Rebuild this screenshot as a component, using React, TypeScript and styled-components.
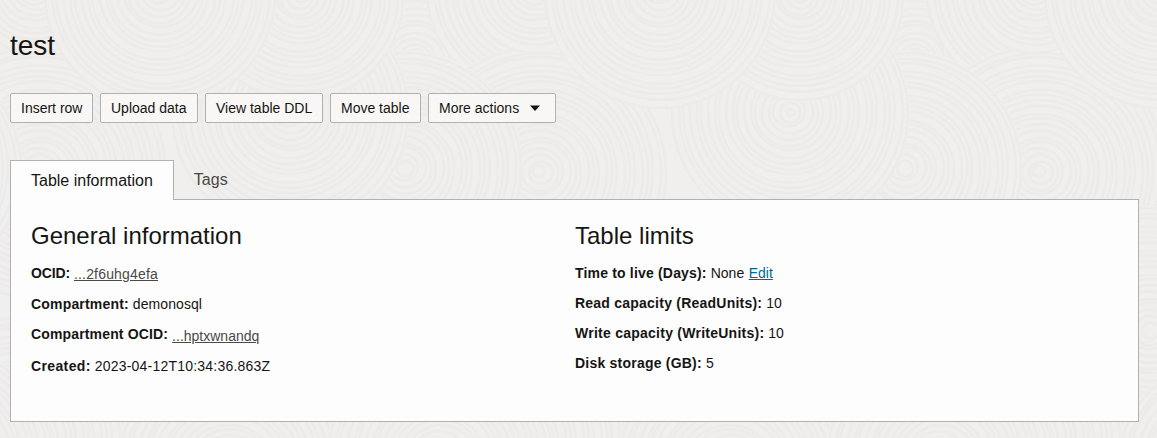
import React from "react";
import styled, { createGlobalStyle } from "styled-components";

const GlobalStyle = createGlobalStyle`
  *, *::before, *::after { box-sizing: border-box; }
  body {
    margin: 0;
    background: #f0efed;
    color: #161513;
    font-family: "Liberation Sans", Arial, sans-serif;
    font-size: 14px;
  }
`;

const Page = styled.main`
  position: relative;
  min-height: 438px;
  padding: 29px 18px 16px 10px;
  overflow: hidden;
`;

const Texture = styled.svg`
  position: absolute;
  inset: 0;
  width: 100%;
  height: 100%;
  z-index: -1;
`;

const Title = styled.h1`
  margin: 0;
  height: 64px;
  font-size: 28px;
  line-height: 34px;
  font-weight: 400;
`;

const Toolbar = styled.div`
  display: flex;
  gap: 7px;
  height: 30px;
`;

const ActionButton = styled.button<{ $width: number }>`
  display: flex;
  align-items: center;
  width: ${(p) => p.$width}px;
  height: 30px;
  padding: 0 0 0 10px;
  border: 1px solid #b3b1ae;
  border-radius: 2px;
  background: #f8f7f5;
  color: #161513;
  font: inherit;
  white-space: nowrap;
`;

const Caret = styled.svg`
  width: 10px;
  height: 6px;
  margin-left: 11px;
`;

const TabList = styled.div`
  display: flex;
  height: 40px;
  margin-top: 37px;
  margin-bottom: -1px;
  position: relative;
`;

const Tab = styled.button<{ $active?: boolean }>`
  height: 40px;
  padding: ${(p) => (p.$active ? "0 20px 0 20px" : "0 20px 2px 20px")};
  border: 1px solid ${(p) => (p.$active ? "#b3b1ae" : "transparent")};
  border-bottom: 0;
  border-left-width: ${(p) => (p.$active ? 1 : 0)}px;
  background: ${(p) => (p.$active ? "#fdfdfd" : "transparent")};
  color: ${(p) => (p.$active ? "#161513" : "#4b4946")};
  font: 16px "Liberation Sans", Arial, sans-serif;
`;

const Panel = styled.section`
  display: grid;
  grid-template-columns: 544px 1fr;
  height: 223px;
  padding: 22px 20px;
  border: 1px solid #b3b1ae;
  background: #fdfdfd;
`;

const Heading = styled.h2`
  margin: 0 0 15px;
  font-size: 24px;
  line-height: 28px;
  font-weight: 400;
`;

const Details = styled.dl`
  margin: 0;
`;

const Detail = styled.div<{ $height?: number }>`
  display: flex;
  gap: 4px;
  height: ${(p) => p.$height ?? 30}px;
  line-height: 16px;
  white-space: nowrap;
`;

const Label = styled.dt<{ $spacing?: number }>`
  font-weight: 700;
  letter-spacing: ${(p) => p.$spacing ?? 0}px;
`;

const Value = styled.dd<{ $drop?: number; $spacing?: number }>`
  margin: 0;
  padding-top: ${(p) => p.$drop ?? 0}px;
  letter-spacing: ${(p) => p.$spacing ?? 0}px;
`;

const IdLink = styled.a`
  color: #4b4946;
  text-decoration: underline;
`;

const EditLink = styled.a`
  margin-left: 4.5px;
  color: #00688c;
  text-decoration: underline;
`;

const swirls = [
  { x: 415, y: 60, r: 180 },
  { x: 35, y: -12, r: 110 },
  { x: 40, y: 172, r: 128 },
  { x: 405, y: 168, r: 118 },
  { x: 290, y: 112, r: 120 },
  { x: 300, y: -4, r: 105 },
  { x: 35, y: -12, r: 66 },
  { x: 160, y: -8, r: 117 },
  { x: 150, y: 330, r: 125 },
  { x: 330, y: 360, r: 130 },
  { x: 20, y: 440, r: 125 },
  { x: 230, y: 470, r: 115 },
  { x: 440, y: 460, r: 115 },
];

function Swirl({ x, y, r }: { x: number; y: number; r: number }) {
  const rings = Array.from({ length: Math.floor(r / 6) }, (_, i) => r - 2 - i * 6);
  return (
    <g>
      <circle cx={x} cy={y} r={r} fill="#f0efed" />
      {rings.map((radius, i) => (
        <ellipse
          key={radius}
          cx={x + Math.sin(i * 2.1) * 1.2}
          cy={y + Math.cos(i * 1.7)}
          rx={radius}
          ry={radius - (i % 2)}
          fill="none"
          stroke="#ecebe9"
          strokeWidth="2.4"
        />
      ))}
    </g>
  );
}

function BackgroundTexture() {
  return (
    <Texture aria-hidden="true">
      <defs>
        <pattern id="swirls" width="500" height="500" patternUnits="userSpaceOnUse">
          {swirls.map((s, i) => (
            <React.Fragment key={i}>
              <Swirl {...s} x={s.x - 500} />
              <Swirl {...s} />
              <Swirl {...s} x={s.x + 500} />
            </React.Fragment>
          ))}
        </pattern>
      </defs>
      <rect width="100%" height="100%" fill="url(#swirls)" />
    </Texture>
  );
}

export default function App() {
  return (
    <>
      <GlobalStyle />
      <Page>
        <BackgroundTexture />
        <Title>test</Title>
        <Toolbar>
          <ActionButton $width={83}>Insert row</ActionButton>
          <ActionButton $width={98}>Upload data</ActionButton>
          <ActionButton $width={118}>View table DDL</ActionButton>
          <ActionButton $width={91}>Move table</ActionButton>
          <ActionButton $width={128}>
            More actions
            <Caret viewBox="0 0 10 6">
              <path d="M0 0.5H10L5 6Z" fill="#161513" />
            </Caret>
          </ActionButton>
        </Toolbar>
        <TabList>
          <Tab $active>Table information</Tab>
          <Tab>Tags</Tab>
        </TabList>
        <Panel>
          <div>
            <Heading>General information</Heading>
            <Details>
              <Detail $height={31}>
                <Label $spacing={-0.15}>OCID:</Label>
                <Value $drop={1} $spacing={0.18}><IdLink>...2f6uhg4efa</IdLink></Value>
              </Detail>
              <Detail>
                <Label $spacing={0.18}>Compartment:</Label>
                <Value $spacing={0.08}>demonosql</Value>
              </Detail>
              <Detail $height={32}>
                <Label $spacing={0.15}>Compartment OCID:</Label>
                <Value $drop={2}><IdLink>...hptxwnandq</IdLink></Value>
              </Detail>
              <Detail>
                <Label $spacing={0.37}>Created:</Label>
                <Value $spacing={0.21}>2023-04-12T10:34:36.863Z</Value>
              </Detail>
            </Details>
          </div>
          <div>
            <Heading>Table limits</Heading>
            <Details>
              <Detail>
                <Label $spacing={0.18}>Time to live (Days):</Label>
                <Value>None<EditLink>Edit</EditLink></Value>
              </Detail>
              <Detail>
                <Label $spacing={0.23}>Read capacity (ReadUnits):</Label>
                <Value>10</Value>
              </Detail>
              <Detail>
                <Label $spacing={0.25}>Write capacity (WriteUnits):</Label>
                <Value>10</Value>
              </Detail>
              <Detail>
                <Label $spacing={0.22}>Disk storage (GB):</Label>
                <Value>5</Value>
              </Detail>
            </Details>
          </div>
        </Panel>
      </Page>
    </>
  );
}
